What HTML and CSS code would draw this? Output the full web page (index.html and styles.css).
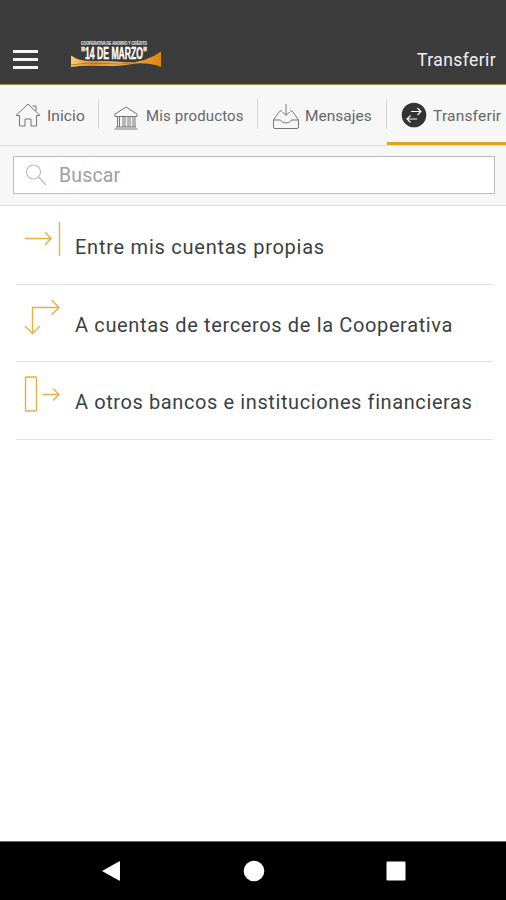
FILE: index.html
```html
<!DOCTYPE html>
<html lang="es">
<head>
    <meta charset="UTF-8">
    <title>Transferir</title>
    <link rel="stylesheet" href="styles.css">
</head>
<body>
    <header class="header">
        <div class="menu">
            <span></span>
            <span></span>
            <span></span>
        </div>
        <svg class="logo" width="92" height="30" viewBox="0 0 92 30">
            <defs>
                <linearGradient id="oro">
                    <stop offset="0" stop-color="#f8d070"/>
                    <stop offset="0.25" stop-color="#e08a28"/>
                    <stop offset="0.5" stop-color="#f0b860"/>
                    <stop offset="1" stop-color="#e0850c"/>
                </linearGradient>
            </defs>
            <path fill="url(#oro)" d="M1 15.500 Q9 21.500 24 21 Q38 20.500 52 22 Q74 24 91 11.500 V27 Q80 22.500 66 23.500 Q50 26.500 30 26 Q14 25 1 27 Z"/>
            <path fill="none" stroke="#b5651a" stroke-width="0.8" d="M1 25 Q18 22 34 23.500 T66 22.500"/>
            <text class="logo-top" x="11" y="5" textLength="66" lengthAdjust="spacingAndGlyphs">COOPERATIVA DE AHORRO Y CRÉDITO</text>
            <text class="logo-name" x="11" y="18.500" textLength="66" lengthAdjust="spacingAndGlyphs">"14 DE MARZO"</text>
        </svg>
        <span class="title">Transferir</span>
    </header>

    <nav class="tabs">
        <div class="tab inicio">
            <svg width="26" height="26" viewBox="0 0 26 26">
                <path d="M1 13.5 L13 2 L25 13.5 H21.5 V24 H16 V17 H10 V24 H4.500 V13.500 Z M17.500 4 H21 V9"/>
            </svg>
            <span>Inicio</span>
        </div>
        <div class="tab productos">
            <svg width="26" height="26" viewBox="0 0 26 26">
                <path d="M2 9 L13 2 L24 9 V11.500 H2 Z M3 22 H23 M1.500 24 H24.500"/>
                <path d="M4.500 12 V22 M6.500 12 V22 M10 12 V22 M12 12 V22 M15 12 V22 M17 12 V22 M20 12 V22 M22 12 V22"/>
            </svg>
            <span>Mis productos</span>
        </div>
        <div class="tab mensajes">
            <svg width="28" height="28" viewBox="0 0 28 28">
                <path d="M14 1 V12 M10.500 9 L14 12.500 L17.500 9"/>
                <path d="M10 7.500 Q7 8 6 10.500 L1.500 17 V24 Q1.500 25.500 3 25.500 H25 Q26.500 25.500 26.500 24 V17 L22 10.500 Q21 8 18 7.500 M1.500 17 H8.500 Q10 20 14 20 Q18 20 19.500 17 H26.500"/>
            </svg>
            <span>Mensajes</span>
        </div>
        <div class="tab transferir active">
            <svg width="26" height="26" viewBox="0 0 26 26">
                <circle cx="13" cy="13" r="12.300"/>
                <path d="M10 9.500 H20 M16.500 6 L20 9.500 L16.500 13 M16 17 H6 M9.500 13.500 L6 17 L9.500 20.500"/>
            </svg>
            <span>Transferir</span>
        </div>
    </nav>

    <div class="search">
        <div class="search-box">
            <svg width="24" height="24" viewBox="0 0 24 24">
                <circle cx="8.500" cy="9" r="7"/>
                <path d="M13.500 14 L21 22"/>
            </svg>
            <span>Buscar</span>
        </div>
    </div>

    <main class="list">
        <div class="item">
            <svg width="38" height="38" viewBox="0 0 38 38">
                <path d="M2 18.500 H28 M22 12 L28 18.500 L22 25 M36.500 2 V36"/>
            </svg>
            <span class="item-1">Entre mis cuentas propias</span>
        </div>
        <div class="item">
            <svg width="38" height="38" viewBox="0 0 38 38">
                <path d="M9.500 36 V9.500 H36 M28.500 2 L36 9.500 L28.500 17 M2 28 L9.500 35.500 L17 28"/>
            </svg>
            <span class="item-2">A cuentas de terceros de la Cooperativa</span>
        </div>
        <div class="item">
            <svg width="38" height="38" viewBox="0 0 38 38">
                <rect x="2.500" y="2" width="11" height="34" rx="1"/>
                <path d="M19.500 19.500 H36 M30 13.500 L36 19.500 L30 25.500"/>
            </svg>
            <span class="item-3">A otros bancos e instituciones financieras</span>
        </div>
    </main>

    <footer class="navbar">
        <svg width="20" height="22" viewBox="0 0 20 22"><path d="M1 11 L18 1.500 Q19 1 19 2 V20 Q19 21 18 20.500 Z"/></svg>
        <svg width="22" height="22" viewBox="0 0 22 22"><circle cx="11" cy="11" r="10.300"/></svg>
        <svg width="20" height="20" viewBox="0 0 20 20"><rect x="0.500" y="0.500" width="19" height="19" rx="1"/></svg>
    </footer>
</body>
</html>
```
FILE: styles.css
```css
* {
    box-sizing: border-box;
}

body {
    margin: 0;
    height: 900px;
    display: flex;
    flex-direction: column;
    overflow: hidden;
    background: #fff;
    font-family: Roboto, "Liberation Sans", sans-serif;
    font-weight: 400;
}

svg {
    display: block;
    flex-shrink: 0;
}

span {
    white-space: nowrap;
}

.header {
    height: 85px;
    flex-shrink: 0;
    display: flex;
    align-items: flex-start;
    padding: 40px 11px 0 13px;
    background: #3c3c3c;
    border-bottom: 1px solid #a88f45;
}

.menu {
    width: 25px;
    margin-top: 10px;
}

.menu span {
    display: block;
    height: 3px;
    margin-bottom: 5px;
    background: #f4f4f4;
}

.logo {
    margin-left: 32px;
}

.logo-top {
    font: bold 4.5px "Liberation Sans", sans-serif;
    fill: #ddd;
    stroke: #ddd;
    stroke-width: 0.2;
}

.logo-name {
    font: bold 16px "Liberation Sans", sans-serif;
    fill: #fff;
    stroke: #fff;
    stroke-width: 0.4;
}

.title {
    margin-left: auto;
    margin-top: 9px;
    font-size: 17.5px;
    line-height: 22px;
    letter-spacing: 0.4px;
    margin-right: -1px;
    color: #f2f2f2;
}

.tabs {
    height: 61px;
    flex-shrink: 0;
    display: flex;
    overflow: hidden;
    background: #f7f7f7;
    border-bottom: 1px solid #dcdcdc;
}

.tab {
    position: relative;
    flex-shrink: 0;
    display: flex;
    align-items: flex-start;
    padding-top: 17px;
    color: #666;
    font-size: 15.5px;
}

.tab span {
    margin-top: 4px;
    line-height: 20px;
}

.tab svg {
    fill: none;
    stroke: #777;
    stroke-width: 1;
}

/* separator between tabs */
.tab + .tab::before {
    content: "";
    position: absolute;
    left: -1px;
    top: 14px;
    width: 1px;
    height: 30px;
    background: #d4d4d4;
}

.inicio {
    width: 99px;
    padding-left: 15px;
    gap: 6px;
    letter-spacing: 0.1px;
}

.productos {
    width: 159px;
    padding-left: 14px;
    gap: 8px;
    font-size: 15px;
    letter-spacing: 0.15px;
}

.productos svg {
    margin-top: 3px;
    margin-right: -1px;
}

.mensajes {
    width: 129px;
    padding-left: 14px;
    gap: 5px;
}

.mensajes svg {
    margin-top: 1px;
}

.transferir {
    width: 119px;
    padding-left: 14px;
    gap: 6px;
    letter-spacing: 0.2px;
}

.tab.active {
    border-bottom: 3px solid #dda41c;
}

.active svg circle {
    fill: #333;
    stroke: none;
}

.active svg path {
    stroke: #f7f7f7;
    stroke-width: 1.2;
}

.search {
    height: 60px;
    flex-shrink: 0;
    padding: 10px 11px 0 13px;
    background: #f7f7f7;
    border-bottom: 1px solid #dcdcdc;
}

.search-box {
    height: 38px;
    display: flex;
    align-items: center;
    gap: 10px;
    padding-left: 11px;
    background: #fff;
    border: 1px solid #bbb;
    color: #9a9fa3;
    font-size: 19.5px;
    letter-spacing: 0.15px;
}

.search-box svg {
    fill: none;
    stroke: #bbb;
    stroke-width: 1.2;
}

.list {
    flex: 1;
    padding: 1px 13px 0 16px;
}

.item {
    height: 77.500px;
    display: flex;
    align-items: flex-start;
    padding: 13px 0 0 7px;
    gap: 14px;
    border-bottom: 1px solid #e2e2e2;
}

.item svg {
    fill: none;
    stroke: #e8b040;
    stroke-width: 1.4;
}

.item span {
    margin-top: 14px;
    line-height: 26px;
    font-size: 20px;
    color: #3c3f44;
}

.item-1 {
    letter-spacing: 0.75px;
}

.item-2 {
    letter-spacing: 0.64px;
}

.item-3 {
    letter-spacing: 0.6px;
}

.navbar {
    height: 59px;
    flex-shrink: 0;
    display: flex;
    align-items: center;
    justify-content: space-between;
    padding: 0 100px 0 101px;
    background: #000;
    border-top: 1px solid #666;
}

.navbar svg {
    fill: #fff;
}
```
